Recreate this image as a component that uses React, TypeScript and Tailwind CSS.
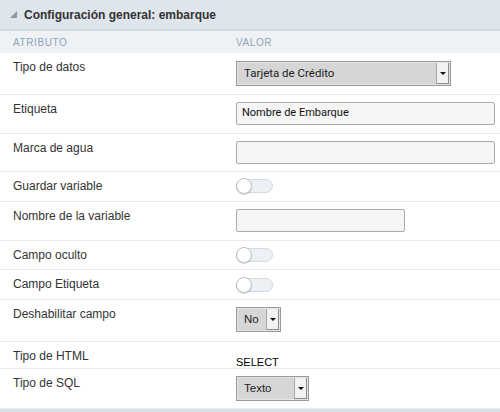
import React from "react"

const sans = { fontFamily: '"Liberation Sans", Arial, sans-serif' }
const ui = { fontFamily: 'Roboto, "Liberation Sans", sans-serif' }

const Select = ({ value, width, font }: { value: string; width: string; font?: React.CSSProperties }) => (
  <div className={`flex h-[25px] ${width} border border-[#9a9a9a] bg-[#d6d6d6] shadow-[inset_0_0_0_1px_#e4e4e4]`}>
    <div className="flex flex-1 items-center pl-[7px] text-[11.5px] text-[#222]" style={font ?? sans}>
      {value}
    </div>
    <div className="my-[1px] mr-[1px] flex w-[13px] items-center justify-center border-l border-[#a8a8a8] bg-[#f2f2f2] shadow-[inset_-1px_-1px_0_#8c8c8c]">
      <div className="h-0 w-0 border-x-[3px] border-t-[3px] border-x-transparent border-t-[#111]" />
    </div>
  </div>
)

const Input = ({ value, width }: { value?: string; width: string }) => (
  <div
    className={`flex h-[23px] ${width} items-center rounded-[2px] border border-[#a4acb6] bg-[#f5f5f5] pl-[5px] text-[11px] text-[#111]`}
    style={ui}
  >
    {value}
  </div>
)

const Toggle = () => (
  <div className="relative h-[14px] w-[37px] rounded-full border border-[#d3dae1] bg-[#edf1f5]">
    <div className="absolute left-[-1px] top-[-2px] h-[16px] w-[16px] rounded-full border border-[#b9c1c9] bg-white shadow-[0_1px_1px_rgba(0,0,0,0.15)]" />
  </div>
)

type Row = { label: string; h: string; pt?: string; value: React.ReactNode }

const rows: Row[] = [
  { label: "Tipo de datos", h: "h-[42px]", pt: "pt-[8px]", value: <Select value="Tarjeta de Crédito" width="w-[215px]" font={ui} /> },
  { label: "Etiqueta", h: "h-[39px]", value: <Input value="Nombre de Embarque" width="w-[259px]" /> },
  { label: "Marca de agua", h: "h-[38px]", value: <Input width="w-[259px]" /> },
  { label: "Guardar variable", h: "h-[30px]", value: <Toggle /> },
  { label: "Nombre de la variable", h: "h-[39px]", value: <Input width="w-[169px]" /> },
  { label: "Campo oculto", h: "h-[29px]", value: <Toggle /> },
  { label: "Campo Etiqueta", h: "h-[30px]", pt: "pt-[8px]", value: <Toggle /> },
  { label: "Deshabilitar campo", h: "h-[42px]", value: <Select value="No" width="w-[45px]" /> },
  {
    label: "Tipo de HTML",
    h: "h-[27px]",
    pt: "pt-[7px]",
    value: (
      <span className="text-[11px] leading-[14px] text-black" style={sans}>
        SELECT
      </span>
    ),
  },
  { label: "Tipo de SQL", h: "h-[40px]", value: <Select value="Texto" width="w-[73px]" /> },
]

export default function App() {
  return (
    <div className="w-[500px] bg-white" style={sans}>
      <div className="flex h-[31px] items-center gap-[6px] border-b-2 border-[#d2d9e1] bg-[#dfe5ec] pl-[10px]">
        <svg width="8" height="8" viewBox="0 0 8 8" className="mt-[1px]">
          <polygon points="7,0 7,7 0,7" fill="#8e969e" />
        </svg>
        <span className="text-[12px] font-bold text-[#333]">Configuración general: embarque</span>
      </div>
      <div className="grid h-[22px] grid-cols-[223px_1fr] items-center bg-[#eef2f5] text-[10px] tracking-[0.6px] text-[#8da3b8]">
        <div className="pl-[13px]">ATRIBUTO</div>
        <div className="pl-[13px]">VALOR</div>
      </div>
      {rows.map((r) => (
        <div key={r.label} className={`grid ${r.h} grid-cols-[223px_1fr] border-b border-[#e8ecf0]`}>
          <div className="pl-[13px] pt-[7px] text-[12px] leading-[14px] text-[#333]">{r.label}</div>
          <div className={`pl-[13px] ${r.pt ?? "pt-[7px]"}`}>{r.value}</div>
        </div>
      ))}
      <div className="h-[4px] bg-[#d8dfe6]" />
    </div>
  )
}
